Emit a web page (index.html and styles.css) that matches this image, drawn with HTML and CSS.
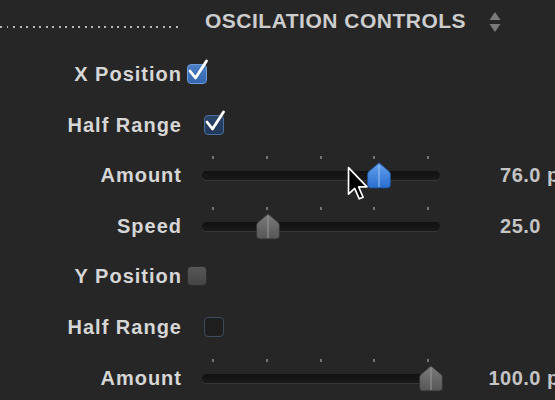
FILE: index.html
```html
<!DOCTYPE html>
<html>
<head>
<meta charset="utf-8">
<link rel="stylesheet" href="styles.css">
</head>
<body>
<div class="panel">
  <div class="head">
    <span class="dots"></span>
    <span class="title">OSCILATION CONTROLS</span>
    <svg class="updown" width="14" height="22" viewBox="0 0 14 22">
      <path d="M7 1 L12.5 9 L1.5 9 Z" fill="#7a7a7a"/>
      <path d="M7 21 L12.5 13 L1.5 13 Z" fill="#7a7a7a"/>
    </svg>
  </div>
  <div class="rows">
    <div class="row">
      <span class="lbl">X Position</span>
      <span class="cb cb-on cb-near">
        <svg class="tick" width="26" height="28" viewBox="0 0 26 28"><path d="M5 14 L10.5 21 L21.5 4" fill="none" stroke="#fff" stroke-width="2.8" stroke-linecap="round" stroke-linejoin="round"/></svg>
      </span>
    </div>
    <div class="row">
      <span class="lbl">Half Range</span>
      <span class="cb cb-on cb-dim cb-far">
        <svg class="tick" width="26" height="28" viewBox="0 0 26 28"><path d="M5 14 L10.5 21 L21.5 4" fill="none" stroke="#fff" stroke-width="2.8" stroke-linecap="round" stroke-linejoin="round"/></svg>
      </span>
    </div>
    <div class="row">
      <span class="lbl">Amount</span>
      <div class="slider">
        <div class="ticks"><i></i><i></i><i></i><i></i><i></i></div>
        <div class="track"></div>
        <svg class="thumb" style="left: 163.9px" width="26" height="27" viewBox="0 0 24 26">
          <defs><linearGradient id="gb" x1="0" y1="0" x2="0" y2="1"><stop offset="0" stop-color="#63a3f0"/><stop offset="1" stop-color="#2a6ccc"/></linearGradient></defs>
          <path d="M12 0.8 L21.6 9 Q23 10.2 23 12 L23 22 Q23 25 20 25 L4 25 Q1 25 1 22 L1 12 Q1 10.2 2.4 9 Z" fill="url(#gb)" stroke="#1d4f99" stroke-width="0.8"/>
          <line x1="12" y1="3" x2="12" y2="24" stroke="#9cc6f7" stroke-width="1"/>
        </svg>
      </div>
      <span class="val">76.0</span><span class="unit">px</span>
    </div>
    <div class="row">
      <span class="lbl">Speed</span>
      <div class="slider">
        <div class="ticks"><i></i><i></i><i></i><i></i><i></i></div>
        <div class="track"></div>
        <svg class="thumb" style="left: 53.25px" width="26" height="27" viewBox="0 0 24 26">
          <defs><linearGradient id="gg1" x1="0" y1="0" x2="0" y2="1"><stop offset="0" stop-color="#7c7c7c"/><stop offset="1" stop-color="#565656"/></linearGradient></defs>
          <path d="M12 0.8 L21.6 9 Q23 10.2 23 12 L23 22 Q23 25 20 25 L4 25 Q1 25 1 22 L1 12 Q1 10.2 2.4 9 Z" fill="url(#gg1)" stroke="#333" stroke-width="0.8"/>
          <line x1="12" y1="3" x2="12" y2="24" stroke="#999" stroke-width="1"/>
        </svg>
      </div>
      <span class="val">25.0</span>
    </div>
    <div class="row">
      <span class="lbl">Y Position</span>
      <span class="cb cb-off cb-near"></span>
    </div>
    <div class="row">
      <span class="lbl">Half Range</span>
      <span class="cb cb-empty cb-far"></span>
    </div>
    <div class="row">
      <span class="lbl">Amount</span>
      <div class="slider">
        <div class="ticks"><i></i><i></i><i></i><i></i><i></i></div>
        <div class="track"></div>
        <svg class="thumb" style="left: 216px" width="26" height="27" viewBox="0 0 24 26">
          <defs><linearGradient id="gg2" x1="0" y1="0" x2="0" y2="1"><stop offset="0" stop-color="#7c7c7c"/><stop offset="1" stop-color="#565656"/></linearGradient></defs>
          <path d="M12 0.8 L21.6 9 Q23 10.2 23 12 L23 22 Q23 25 20 25 L4 25 Q1 25 1 22 L1 12 Q1 10.2 2.4 9 Z" fill="url(#gg2)" stroke="#333" stroke-width="0.8"/>
          <line x1="12" y1="3" x2="12" y2="24" stroke="#999" stroke-width="1"/>
        </svg>
      </div>
      <span class="val">100.0</span><span class="unit">px</span>
    </div>
  </div>
  <svg class="cursor" width="23" height="36" viewBox="0 0 18 28">
    <path d="M1.2 1.2 L1.2 22 L6 17.4 L9.6 25.6 L12.6 24.4 L9.1 16.3 L15.6 16.3 Z" fill="#000" stroke="#fff" stroke-width="1.3" stroke-linejoin="round"/>
  </svg>
</div>
</body>
</html>
```

FILE: styles.css
```css
html, body {
  margin: 0;
  padding: 0;
}
body {
  width: 555px;
  height: 400px;
  overflow: hidden;
  background: #262626;
  font-family: "Liberation Sans", Arial, Helvetica, sans-serif;
  font-weight: bold;
}
.panel {
  position: relative;
  width: 555px;
  height: 400px;
}
.head {
  height: 48.7px;
  display: flex;
  align-items: flex-start;
}
.dots {
  width: 182px;
  height: 2px;
  margin-top: 26px;
  background: repeating-linear-gradient(to right, #b8b8b8 0 2px, transparent 2px 6.5px);
}
.title {
  margin-left: 23px;
  margin-top: 9px;
  font-size: 21px;
  letter-spacing: 0.5px;
  color: #cdcdcd;
  line-height: 24px;
}
.updown {
  margin-left: 22px;
  margin-top: 11px;
}
.rows {
  display: grid;
  grid-auto-rows: 50.6px;
}
.row {
  display: flex;
  align-items: center;
}
.lbl {
  width: 182px;
  text-align: right;
  font-size: 20px;
  letter-spacing: 1px;
  color: #d6d6d6;
  line-height: 24px;
}
.cb {
  position: relative;
  width: 20px;
  height: 20px;
  border-radius: 4px;
  box-sizing: border-box;
}
.cb-near { margin-left: 5px; }
.cb-far { margin-left: 22px; }
.cb-on {
  background: linear-gradient(#4b7fc6, #3566ad);
  border: 1px solid #6d9ad8;
}
.cb-dim {
  background: linear-gradient(#2a4468, #22385a);
  border: 1px solid #4b6f9e;
}
.cb-off {
  background: linear-gradient(#575757, #444);
  border: 1px solid #2d2d2d;
}
.cb-empty {
  background: #1f1f1f;
  border: 1.5px solid #3f4b5a;
}
.tick {
  position: absolute;
  left: -3px;
  top: -8px;
}
.slider {
  position: relative;
  width: 238px;
  height: 50px;
  margin-left: 20px;
}
.ticks {
  position: absolute;
  left: 10px;
  right: 11px;
  top: 6px;
  display: flex;
  justify-content: space-between;
}
.ticks i {
  display: block;
  width: 2px;
  height: 3px;
  background: #747474;
}
.track {
  position: absolute;
  left: 0;
  right: 0;
  top: 21px;
  height: 9px;
  border-radius: 5px;
  background: linear-gradient(#111, #1a1a1a);
  box-shadow: 0 1px 0 #363636;
}
.thumb {
  position: absolute;
  top: 12px;
}
.val {
  width: 101px;
  text-align: right;
  font-size: 20px;
  letter-spacing: 0.5px;
  color: #c4c4c4;
  line-height: 24px;
}
.unit {
  margin-left: 6px;
  font-size: 20px;
  color: #c4c4c4;
  line-height: 24px;
}
.cursor {
  position: absolute;
  left: 347px;
  top: 166px;
}
```
